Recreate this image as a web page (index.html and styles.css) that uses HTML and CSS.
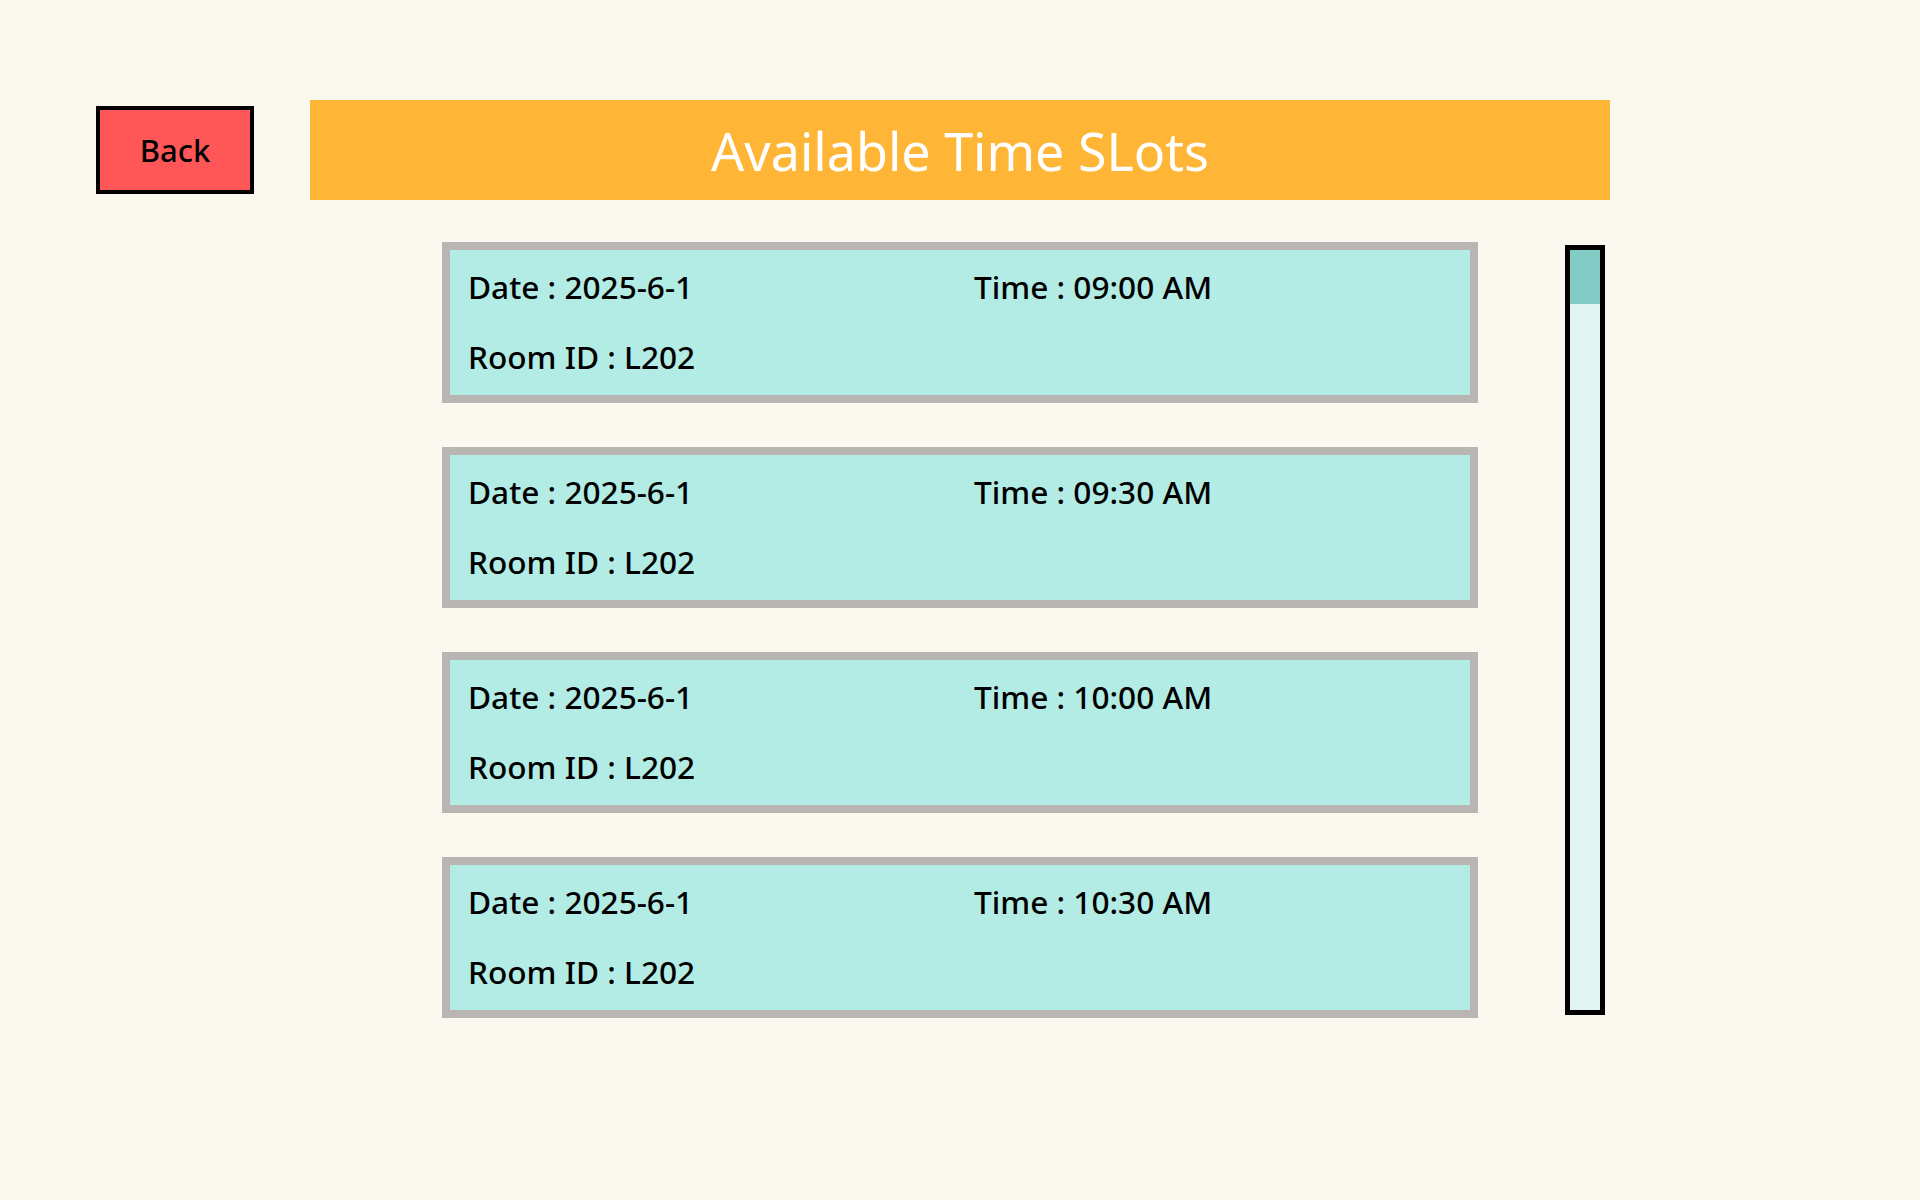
FILE: index.html
```html
<!DOCTYPE html>
<html lang="en">
<head>
<meta charset="utf-8">
<title>Available Time Slots</title>
<link rel="stylesheet" href="styles.css">
</head>
<body>
<div class="page">
  <div class="top-row">
    <button class="back-btn">Back</button>
    <div class="title-bar">Available Time SLots</div>
  </div>
  <div class="main-row">
    <div class="slot-list">
      <div class="slot-card">
        <div class="slot-line"><span class="col-date">Date : 2025-6-1</span><span class="col-time">Time : 09:00 AM</span></div>
        <div class="slot-line"><span class="col-date">Room ID : L202</span></div>
      </div>
      <div class="slot-card">
        <div class="slot-line"><span class="col-date">Date : 2025-6-1</span><span class="col-time">Time : 09:30 AM</span></div>
        <div class="slot-line"><span class="col-date">Room ID : L202</span></div>
      </div>
      <div class="slot-card">
        <div class="slot-line"><span class="col-date">Date : 2025-6-1</span><span class="col-time">Time : 10:00 AM</span></div>
        <div class="slot-line"><span class="col-date">Room ID : L202</span></div>
      </div>
      <div class="slot-card">
        <div class="slot-line"><span class="col-date">Date : 2025-6-1</span><span class="col-time">Time : 10:30 AM</span></div>
        <div class="slot-line"><span class="col-date">Room ID : L202</span></div>
      </div>
    </div>
    <div class="scroll-track"><div class="scroll-thumb"></div></div>
  </div>
</div>
</body>
</html>
```

FILE: styles.css
```css
html, body {
  margin: 0;
  padding: 0;
  background: #fbf8f0;
  font-family: "Noto Sans", "Open Sans", sans-serif;
  color: #000;
}

.page {
  width: 1920px;
  height: 1200px;
  box-sizing: border-box;
  padding-top: 100px;
}

.top-row {
  display: flex;
  align-items: center;
  padding-left: 96px;
  gap: 56px;
}

.back-btn {
  width: 158px;
  height: 88px;
  box-sizing: border-box;
  border: 4px solid #000;
  background: #ff5757;
  font-family: "Noto Sans", "Open Sans", sans-serif;
  font-size: 31px;
  font-weight: 500;
  color: #000;
  padding: 0;
  margin: 0;
  line-height: 1;
}

.title-bar {
  width: 1300px;
  height: 100px;
  background: #ffb535;
  color: #fff;
  font-size: 52px;
  display: flex;
  align-items: center;
  justify-content: center;
}

.main-row {
  display: flex;
  align-items: flex-start;
  margin-top: 42px;
  padding-left: 442px;
  gap: 87px;
}

.slot-list {
  display: flex;
  flex-direction: column;
  gap: 44px;
  width: 1036px;
}

.slot-card {
  box-sizing: border-box;
  border: 8px solid #b9b5b3;
  background: #b3ebe5;
  padding: 17px 18px 18px;
  display: flex;
  flex-direction: column;
  gap: 30px;
  font-size: 31.6px;
  font-weight: 500;
}

.slot-line {
  display: flex;
  line-height: 40px;
  height: 40px;
}

.col-date {
  width: 506px;
}

.scroll-track {
  margin-top: 3px;
  width: 40px;
  height: 770px;
  box-sizing: border-box;
  border: 5px solid #000;
  background: #e0f5f2;
}

.scroll-thumb {
  height: 54px;
  background: #82ccc5;
}
```
